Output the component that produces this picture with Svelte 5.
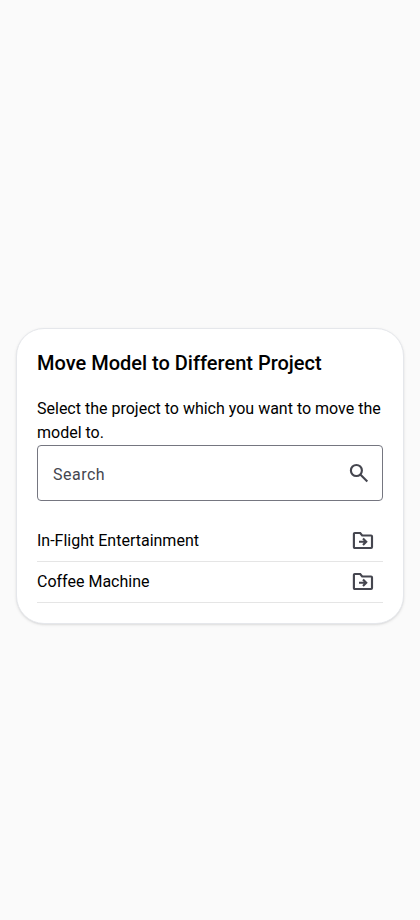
<script>
  const projects = ['In-Flight Entertainment', 'Coffee Machine'];
</script>

<main>
  <section class="card">
    <h2>Move Model to Different Project</h2>
    <p>Select the project to which you want to move the model to.</p>
    <div class="search">
      <span>Search</span>
      <svg class="lens" viewBox="0 0 24 24" width="24" height="24"><circle cx="9.4" cy="9.5" r="5.5" /><path d="M13.300 13.400L20.300 20.400" /></svg>
    </div>
    <div class="list">
      {#each projects as project}
        <div class="row">
          <span>{project}</span>
          <svg viewBox="0 0 24 24" width="24" height="24"><path d="M3.800 19Q2.900 19 2.900 18.100V4.900Q2.900 4 3.800 4H9.200L11.200 6.500H20.100Q21 6.500 21 7.400V18.100Q21 19 20.100 19Z" /><path d="M8 12.700H15.200M12 9.500L15.200 12.700L12 15.900" /></svg>
        </div>
      {/each}
    </div>
  </section>
</main>

<style>
  :global(body) { margin: 0; background: #fafafa; }
  main {
    box-sizing: border-box;
    min-height: 920px;
    padding: 328px 16px 0;
    font-family: Roboto, sans-serif;
    font-size: 16px;
    line-height: 24px;
    color: #000;
  }
  .card {
    box-sizing: border-box;
    height: 296px;
    padding: 20px;
    background: #fff;
    border: 1px solid #e5e7eb;
    border-radius: 28px;
    box-shadow: 0 1px 3px rgba(0, 0, 0, 0.1), 0 1px 2px -1px rgba(0, 0, 0, 0.1);
  }
  h2 { margin: 0 0 20px; font-size: 20px; line-height: 28px; font-weight: 500; }
  p { margin: 0; }
  .search {
    box-sizing: border-box;
    height: 56px;
    display: flex;
    align-items: center;
    justify-content: space-between;
    padding: 0 11px 0 15px;
    border: 1px solid #757680;
    border-radius: 4px;
    color: #45464f;
  }
  .search span { letter-spacing: 0.5px; padding-top: 3px; }
  svg { display: block; fill: none; stroke: #45464f; stroke-width: 2.150; }
  .list { margin-top: 20px; }
  .row {
    box-sizing: border-box;
    height: 41px;
    display: flex;
    align-items: center;
    justify-content: space-between;
    padding-right: 8px;
    border-bottom: 1px solid #e5e5e5;
  }
</style>
